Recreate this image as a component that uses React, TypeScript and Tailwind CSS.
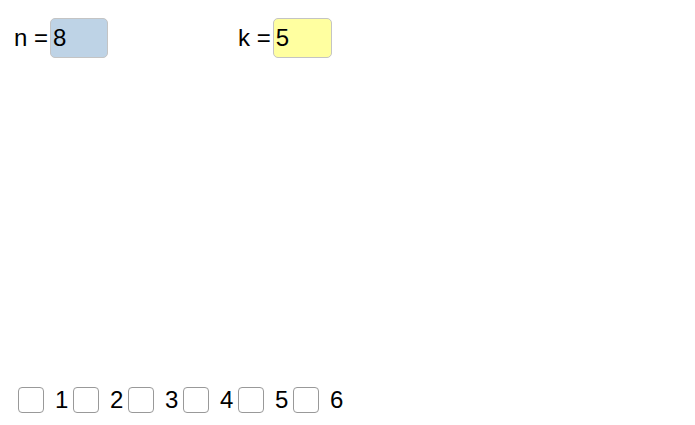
export default function App() {
  const items = [1, 2, 3, 4, 5, 6];
  return (
    <div className="w-[695px] h-[425px] bg-white relative font-['Liberation_Sans',Arial,sans-serif] text-[24px] text-black">
      <div className="flex items-center pt-[17px]">
        <div className="flex items-center ml-[14px]">
          <span className="mr-[2px]">n =</span>
          <div className="w-[58px] h-[40px] rounded-[5px] border border-[#c4c4c4] bg-[#bed3e6] pl-[2px] flex items-center">8</div>
        </div>
        <div className="flex items-center ml-[130px] mt-[1px]">
          <span className="mr-[2px]">k =</span>
          <div className="w-[59px] h-[40px] rounded-[5px] border border-[#c4c4c4] bg-[#ffffa0] pl-[2px] flex items-center">5</div>
        </div>
      </div>
      <div className="absolute left-[18px] top-[387px] flex items-center leading-[26px]">
        {items.map((i) => (
          <div key={i} className="flex items-center w-[55px]">
            <div className="w-[26px] h-[26px] rounded-[4px] border border-[#999999] bg-white" />
            <span className="ml-[11px]">{i}</span>
          </div>
        ))}
      </div>
    </div>
  );
}
